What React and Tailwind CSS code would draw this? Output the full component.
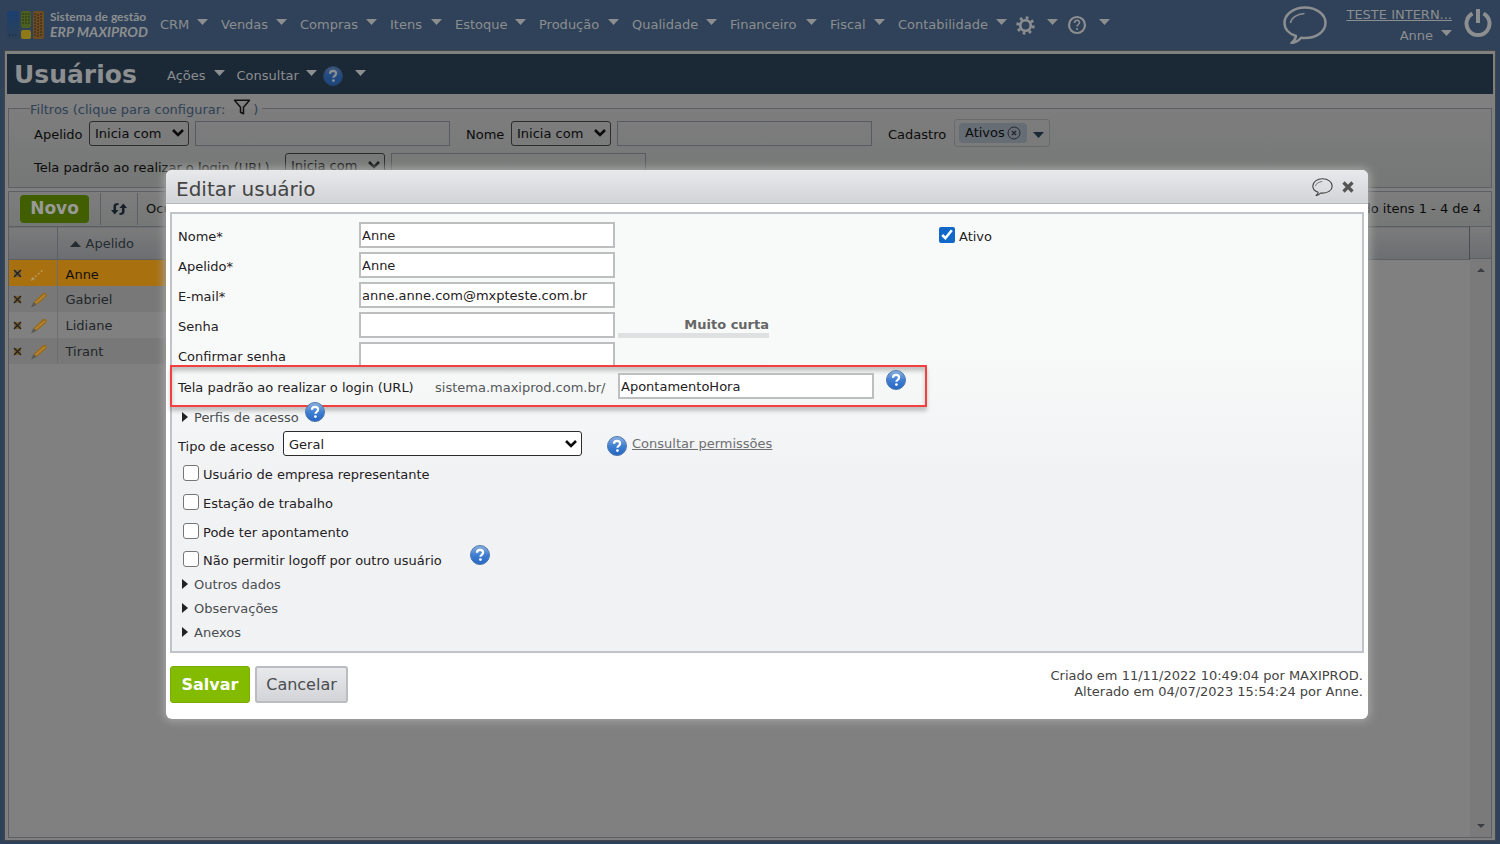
import React, { useState } from 'react';
import { LuFilter } from 'react-icons/lu';

const menus = [
  { label: 'CRM', width: 'w-[48px]' },
  { label: 'Vendas', width: 'w-[66px]' },
  { label: 'Compras', width: 'w-[77px]' },
  { label: 'Itens', width: 'w-[52px]' },
  { label: 'Estoque', width: 'w-[71px]' },
  { label: 'Produção', width: 'w-[80px]' },
  { label: 'Qualidade', width: 'w-[85px]' },
  { label: 'Financeiro', width: 'w-[87px]' },
  { label: 'Fiscal', width: 'w-[55px]' },
  { label: 'Contabilidade', width: 'w-[109px]' },
];

const users = ['Anne', 'Gabriel', 'Lidiane', 'Tirant'];

const accessOptions = ['Usuário de empresa representante', 'Estação de trabalho', 'Pode ter apontamento'];

const Caret = ({ className = '' }) => (
  <svg viewBox="0 0 11 6" className={`h-[6px] w-[11px] shrink-0 ${className}`} fill="currentColor">
    <path d="M0 0h11L5.5 6z" />
  </svg>
);

const HelpIcon = ({ dim = false }) => (
  <svg viewBox="0 0 20 20" className="size-5 shrink-0">
    <defs>
      <linearGradient id={dim ? 'helpDim' : 'help'} x1="0" y1="0" x2="0" y2="1">
        <stop offset="0" stopColor={dim ? '#41597a' : '#8fb2df'} />
        <stop offset="0.5" stopColor={dim ? '#234a80' : '#3f7fd3'} />
        <stop offset="1" stopColor={dim ? '#1c4680' : '#2566c4'} />
      </linearGradient>
    </defs>
    <circle cx="10" cy="10" r="9.5" fill={`url(#${dim ? 'helpDim' : 'help'})`} stroke={dim ? '#27425f' : '#4f79ab'} />
    <path d="M7 7.8C7 5.9 8.3 4.9 10 4.9s3.1 1 3.1 2.6c0 2.3-2.7 2.3-2.7 4.3" fill="none" stroke={dim ? '#8c9096' : '#fff'} strokeWidth="2.2" />
    <circle cx="10.4" cy="14.6" r="1.4" fill={dim ? '#8c9096' : '#fff'} />
  </svg>
);

const Balloon = ({ className, strokeWidth }) => (
  <svg viewBox="0 0 44 38" className={className} fill="none" stroke="currentColor" strokeWidth={strokeWidth} strokeLinejoin="round">
    <path d="M13 30C6 28 1.500 23 1.500 17 1.500 8.500 10.500 1.500 22 1.500S42.500 8.500 42.500 17 33.500 32 22 32c-1.500 0-2.700 0-4-.3-2 2.500-5 4.800-9.500 5.300 2.500-1.800 4-4 4.500-7z" />
    <path d="M7.500 17c.5-5 6-9 14-9.500" strokeWidth={strokeWidth * 0.6} />
  </svg>
);

const Logo = () => (
  <svg viewBox="0 0 38 28" className="h-[28px] w-[38px] shrink-0">
    <defs>
      <linearGradient id="logoBlue" x1="0" y1="0" x2="0" y2="1">
        <stop offset="0" stopColor="#1b3f70" />
        <stop offset="1" stopColor="#2b4058" />
      </linearGradient>
    </defs>
    <rect x="0" y="0" width="12" height="28" rx="3" fill="url(#logoBlue)" />
    <rect x="14" y="0" width="10" height="17" rx="2" fill="#4c5f1e" />
    <rect x="14" y="19" width="10" height="9" rx="2" fill="#8f7a18" />
    <rect x="26" y="0" width="11" height="28" rx="2" fill="#6d4c22" />
    <path d="M28 2v24M31 3v23M34 2v24" stroke="#2c2420" strokeWidth="1" strokeDasharray="2 1" />
    <path d="M15 3h8M15 6h8M15 9h8M15 12h8" stroke="#26351a" strokeDasharray="2 1" />
    <path d="M2 24h8" stroke="#14202e" strokeDasharray="1 2" />
  </svg>
);

const Pencil = ({ faded }) => (
  <svg viewBox="0 0 18 16" className="h-4 w-[18px]">
    {faded ? (
      <>
        <path d="M5 11l9-8" stroke="#c0a070" strokeWidth="1.2" strokeDasharray="2 2" />
        <path d="M2 11l3 2-4 2z" fill="#b59a70" />
      </>
    ) : (
      <>
        <path d="M3.500 10L12.500 1.500c1-1 2.800-.9 3.700.1s.8 2.600-.2 3.500L6.500 13z" fill="#9a6c1f" />
        <path d="M3.500 10l3 3L1 15.500z" fill="#5a5a58" />
        <path d="M5.500 11L15 3" stroke="#b98a35" strokeWidth="1.200" />
      </>
    )}
  </svg>
);

const DeleteMark = () => (
  <svg viewBox="0 0 9 9" className="size-[9px]">
    <path d="M1 1h7v7H1z" fill="#7a6238" />
    <path d="M1 1l7 7M8 1L1 8" stroke="#1e1e1e" strokeWidth="1.200" />
  </svg>
);

const SelectBox = ({ id, options, className }) => (
  <span className={`relative inline-flex ${className}`}>
    <select id={id} className="h-full w-full appearance-none rounded-[3px] border border-[#2c2c2c] bg-transparent pl-[5px] pr-5 pt-[2px]">
      {options.map((o) => (
        <option key={o}>{o}</option>
      ))}
    </select>
    <svg viewBox="0 0 12 8" className="pointer-events-none absolute right-[5px] top-1/2 -mt-1 h-2 w-3" fill="none" stroke="#0b0b0b" strokeWidth="2.600">
      <path d="M1 1l5 5 5-5" />
    </svg>
  </span>
);

const TopBar = () => (
  <header className="flex h-[50px] shrink-0 items-center pl-[7px] pr-2 text-[#8c8e90]">
    <Logo />
    <div className="ml-[5px] w-[110px] pb-[2px] font-['Lato',sans-serif]">
      <div className="text-[12px] font-bold leading-[15px]">Sistema de gestão</div>
      <div className="text-[14px] font-bold italic leading-[15px]">ERP MAXIPROD</div>
    </div>
    <nav className="flex items-center gap-[13px]">
      {menus.map(({ label, width }) => (
        <button key={label} className={`flex items-center justify-between ${width}`}>
          {label}
          <Caret className="mb-[6px]" />
        </button>
      ))}
      <button aria-label="Configurações" className="-ml-1 flex items-center gap-3">
        <svg viewBox="0 0 20 20" className="size-[19px]" fill="none" stroke="currentColor">
          <circle cx="10" cy="10" r="5.500" strokeWidth="2.800" />
          <circle cx="10" cy="10" r="8.200" strokeWidth="3" strokeDasharray="2.900 3.540" />
        </svg>
        <Caret className="mb-[6px]" />
      </button>
      <button aria-label="Ajuda" className="-ml-1 flex items-center gap-3">
        <svg viewBox="0 0 20 20" className="size-5" fill="none" stroke="currentColor">
          <circle cx="10" cy="10" r="8" strokeWidth="2.200" />
          <path d="M7.500 8c0-3.500 5-3.500 5-.5 0 2-2.500 2-2.500 4M10 13v2" strokeWidth="1.600" />
        </svg>
        <Caret className="mb-[6px]" />
      </button>
    </nav>
    <div className="ml-auto flex items-center">
      <Balloon className="h-[38px] w-[44px]" strokeWidth={2.5} />
      <div className="ml-3 flex w-[113px] flex-col items-end leading-[21px]">
        <a href="#empresa" className="underline">TESTE INTERN...</a>
        <button className="flex items-center gap-2">
          Anne
          <Caret className="mb-[6px]" />
        </button>
      </div>
      <button aria-label="Sair" className="mb-1 ml-3">
        <svg viewBox="0 0 28 30" className="h-[30px] w-7" fill="none" stroke="currentColor" strokeWidth="4">
          <path d="M8.500 5.500a11.500 11.500 0 1 0 11 0" />
          <path d="M14 1v14" />
        </svg>
      </button>
    </div>
  </header>
);

const TitleBar = () => (
  <div className="flex h-10 shrink-0 items-center bg-[#1b2937] pl-[7px] pt-1 text-[#8c8e90]">
    <h1 className="w-[153px] pb-1 text-[25px] font-bold leading-none">Usuários</h1>
    <button className="flex items-center gap-2">
      Ações
      <Caret className="mb-[6px]" />
    </button>
    <button className="ml-3 flex items-center gap-[7px]">
      Consultar
      <Caret className="mb-[6px]" />
    </button>
    <button aria-label="Ajuda" className="ml-[6px] flex items-center gap-3">
      <HelpIcon dim />
      <Caret className="mb-[6px]" />
    </button>
  </div>
);

const FilterInput = ({ label }) => (
  <input aria-label={label} className="ml-[6px] h-[25px] w-[255px] border border-[#585b60]" />
);

const Filters = () => (
  <fieldset className="mx-px mt-[6px] h-[88px] shrink-0 border border-[#5c5f63] bg-linear-to-b from-[#7d7d7d] to-[#757876] pl-[25px] text-[#0b0b0b]">
    <legend className="-ml-1 flex h-4 items-center gap-2 text-[#2e4156]">
      <span className="pt-[3px]">Filtros (clique para configurar:</span>
      <span className="flex items-center gap-[2px] pr-1">
        <LuFilter className="mb-[2px] size-[18px] text-[#111]" />
        <span className="pt-[3px]">)</span>
      </span>
    </legend>
    <div className="mt-[3px] flex h-7 items-center">
      <label htmlFor="f-apelido" className="w-[49px] pt-1">Apelido</label>
      <SelectBox id="f-apelido" options={['Inicia com']} className="ml-[6px] h-[25px] w-[100px]" />
      <FilterInput label="Valor de apelido" />
      <label htmlFor="f-nome" className="ml-4 w-[40px] pt-1">Nome</label>
      <SelectBox id="f-nome" options={['Inicia com']} className="ml-[5px] h-[25px] w-[100px]" />
      <FilterInput label="Valor de nome" />
      <span className="ml-4 w-[61px] pt-1">Cadastro</span>
      <div className="ml-[5px] flex h-7 w-[96px] items-center rounded-[3px] border border-[#686b6e] pl-1">
        <span className="flex h-5 items-center gap-[2px] rounded bg-[#666d75] px-[6px]">
          Ativos
          <button aria-label="Remover Ativos">
            <svg viewBox="0 0 14 14" className="size-[14px]" fill="none" stroke="#26292c">
              <circle cx="7" cy="7" r="6" />
              <path d="M5 5l4 4M9 5L5 9" strokeWidth="1.400" />
            </svg>
          </button>
        </span>
        <Caret className="ml-[6px] mt-1 text-[#1b2937]" />
      </div>
    </div>
    <div className="mt-1 flex h-7 items-center">
      <label htmlFor="f-tela" className="w-[245px] pt-[6px]">Tela padrão ao realizar o login (URL)</label>
      <SelectBox id="f-tela" options={['Inicia com']} className="ml-[6px] h-[25px] w-[100px]" />
      <FilterInput label="Valor de tela padrão" />
    </div>
  </fieldset>
);

const rowColors = ['bg-[#a8700f]', 'bg-[#777877]', 'bg-[#808080]', 'bg-[#777877]'];

const UserGrid = () => (
  <section className="mx-px mb-[2px] mt-[3px] flex grow flex-col border border-[#5c5f63]">
    <div className="flex h-[34px] shrink-0 items-center bg-linear-to-b from-[#7d7d7d] to-[#757876] text-[#0b0b0b]">
      <button className="ml-[11px] h-7 w-[69px] rounded bg-[#415f00] text-[17px] font-bold text-[#999]">Novo</button>
      <button aria-label="Atualizar" className="ml-[11px] flex h-8 w-[38px] items-center justify-center border-x border-[#5c5f63]">
        <svg viewBox="0 0 18 14" className="h-[14px] w-[18px]" fill="#15202b">
          <path d="M8.500 1v2C6.500 3 6 3.500 6 5v3h2.500L4.700 12.500 1 8h2.500V4.500C3.500 2 5 1 8.500 1z" />
          <path d="M9.500 13v-2c2 0 2.500-.5 2.500-2V6H9.500l3.800-4.500L17 6h-2.500v3.500c0 2.500-1.500 3.500-5 3.500z" />
        </svg>
      </button>
      <span className="ml-2">Ocultar</span>
      <span className="ml-auto mr-[10px]">Exibindo itens 1 - 4 de 4</span>
    </div>
    <div className="flex grow">
      <table className="grow self-start border-collapse">
        <thead>
          <tr className="h-[33px] border-y border-[#5c5f63] bg-linear-to-b from-[#7b7b7b] to-[#6c6e71] text-left text-[#252b31]">
            <th className="w-[48px] border-r border-[#5c5f63]" aria-label="Comandos"></th>
            <th className="w-[600px] pl-3 font-normal">
              <span className="flex items-center gap-[5px] pt-[2px]">
                <Caret className="rotate-180" />
                Apelido
              </span>
            </th>
            <th className="border-r border-[#4a4d52]" aria-label="Nome"></th>
          </tr>
        </thead>
        <tbody>
          {users.map((user, i) => (
            <tr key={user} className={`h-[26px] ${i === 0 ? 'text-[#14100a]' : 'text-[#22262a]'}`}>
              <td className={`border-r border-[#6c6f72] ${rowColors[i]}`}>
                <span className="flex items-center gap-2 pl-1 pt-[2px]">
                  <DeleteMark />
                  <Pencil faded={i === 0} />
                </span>
              </td>
              <td className={`pl-2 pt-[3px] ${rowColors[i]}`}>{user}</td>
              <td></td>
            </tr>
          ))}
        </tbody>
      </table>
      <div className="flex w-[21px] shrink-0 flex-col items-center justify-between bg-[#7a7a7a] text-[#3a3e44]">
        <div className="flex h-[46px] w-full flex-col items-center justify-between">
          <div className="h-[33px] w-full border-y border-[#5c5f63] bg-linear-to-b from-[#7b7b7b] to-[#6c6e71]" />
          <svg viewBox="0 0 8 4" className="h-1 w-2" fill="currentColor"><path d="M0 4h8L4 0z" /></svg>
        </div>
        <svg viewBox="0 0 8 4" className="mb-[9px] h-1 w-2" fill="currentColor"><path d="M0 0h8L4 4z" /></svg>
      </div>
    </div>
  </section>
);

const FormRow = ({ id, label, type = 'text', value = '', children }) => (
  <div className="flex h-[30px] items-center">
    <label htmlFor={id} className="w-[181px] pt-1">{label}</label>
    <input id={id} type={type} defaultValue={value} className="h-[26px] w-[256px] border-2 border-[#bcbebf] bg-white px-px" />
    {children}
  </div>
);

const Expander = ({ label }) => (
  <button type="button" className="flex h-6 items-center gap-[6px] pl-1 text-[#4a4d50]">
    <svg viewBox="0 0 6 10" className="mb-[2px] h-[10px] w-[6px]" fill="#222"><path d="M0 0l6 5-6 5z" /></svg>
    {label}
  </button>
);

const CheckBox = ({ checked, onChange, label }) => (
  <label className="flex items-center gap-1">
    <input
      type="checkbox"
      checked={checked}
      onChange={onChange}
      className={checked ? 'mb-px size-4 accent-[#1168c8]' : 'mb-px size-4 appearance-none rounded-[3px] border border-[#767676] bg-white'}
    />
    <span className="pt-[3px]">{label}</span>
  </label>
);

const EditUserDialog = () => {
  const [checks, setChecks] = useState({ ativo: true });
  const toggle = (key) => setChecks({ ...checks, [key]: !checks[key] });

  return (
    <div role="dialog" aria-label="Editar usuário" className="w-full overflow-hidden rounded-[6px] bg-white text-[#1f2123] shadow-[0_0_8px_2px_#a4a6a4]">
      <div className="flex h-[34px] items-center border-b border-[#b6b9bd] bg-linear-to-b from-[#e8e9eb] to-[#d3d4d8] pl-[10px] pr-[14px] text-[#444]">
        <h2 className="grow pt-[5px] text-[20px] leading-6">Editar usuário</h2>
        <button aria-label="Comentários"><Balloon className="h-[18px] w-[21px]" strokeWidth={2.4} /></button>
        <button aria-label="Fechar" className="ml-[9px]">
          <svg viewBox="0 0 12 12" className="size-3" stroke="#555" strokeWidth="3.200"><path d="M1.500 1.500l9 9M10.500 1.500l-9 9" /></svg>
        </button>
      </div>

      <form className="px-1 pb-4 pt-2">
        <div className="border-2 border-[#c0c3c7] bg-linear-to-b from-[#f8faf9] from-30% to-[#f1f2f4] to-60% pb-[6px] pl-[6px] pt-[6px]">
          <div className="flex items-center">
            <div className="w-[761px]">
              <FormRow id="nome" label="Nome*" value="Anne" />
            </div>
            <CheckBox label="Ativo" checked={!!checks.ativo} onChange={() => toggle('ativo')} />
          </div>
          <FormRow id="apelido" label="Apelido*" value="Anne" />
          <FormRow id="email" label="E-mail*" value="anne.anne.com@mxpteste.com.br" />
          <FormRow id="senha" label="Senha" type="password">
            <span className="ml-[3px] mt-[5px] w-[151px] border-b-[5px] border-[#dfe0e1] text-right font-bold leading-4 text-[#666]">Muito curta</span>
          </FormRow>
          <div className="h-[25px] overflow-hidden">
            <FormRow id="confirmar" label="Confirmar senha" type="password" />
          </div>

          <div className="-ml-2 flex h-[42px] w-[757px] items-center border-2 border-[#f43f3f] pl-[6px] shadow-[0_4px_4px_#00000038,inset_0_4px_4px_#00000038]">
            <label htmlFor="url" className="w-[257px] pt-1">Tela padrão ao realizar o login (URL)</label>
            <span className="w-[183px] pt-1 text-[#55585a]">sistema.maxiprod.com.br/</span>
            <input id="url" defaultValue="ApontamentoHora" className="h-[26px] w-[256px] border-2 border-[#bcbebf] bg-white px-px" />
            <span className="mb-3 ml-3"><HelpIcon /></span>
          </div>

          <div className="flex h-[21px] items-center gap-[6px]">
            <Expander label="Perfis de acesso" />
            <span className="mb-3"><HelpIcon /></span>
          </div>
          <div className="flex h-[31px] items-center">
            <label htmlFor="tipo" className="w-[105px] pt-[6px]">Tipo de acesso</label>
            <SelectBox id="tipo" options={['Geral']} className="h-[25px] w-[299px] rounded-[3px] bg-white" />
            <span className="ml-[25px] pt-1"><HelpIcon /></span>
            <a href="#permissoes" className="ml-[5px] text-[#6d6f71] underline">Consultar permissões</a>
          </div>

          <div className="pl-[5px]">
            {accessOptions.map((option) => (
              <div key={option} className="flex h-[29px] items-center">
                <CheckBox label={option} checked={!!checks[option]} onChange={() => toggle(option)} />
              </div>
            ))}
            <div className="flex h-[27px] items-center">
              <CheckBox label="Não permitir logoff por outro usuário" checked={!!checks.logoff} onChange={() => toggle('logoff')} />
              <span className="mb-[10px] ml-7"><HelpIcon /></span>
            </div>
          </div>
          <Expander label="Outros dados" />
          <Expander label="Observações" />
          <Expander label="Anexos" />
        </div>

        <div className="mt-[13px] flex items-start gap-[5px] text-base">
          <button type="button" className="h-[37px] w-20 rounded-[3px] border border-[#78ae00] bg-[#82bb00] font-bold text-white">Salvar</button>
          <button type="button" className="h-[37px] w-[93px] rounded-[3px] border-2 border-[#b9bcc0] bg-linear-to-b from-[#e8e9eb] to-[#d3d4d8] text-[#4a4d50]">Cancelar</button>
          <p className="ml-auto pr-px pt-[2px] text-right text-[13px] leading-4 text-[#444]">
            Criado em 11/11/2022 10:49:04 por MAXIPROD.
            <br />
            Alterado em 04/07/2023 15:54:24 por Anne.
          </p>
        </div>
      </form>
    </div>
  );
};

const App = () => (
  <div className="relative flex min-h-screen flex-col bg-[#2f4259] font-['DejaVu_Sans',Verdana,sans-serif] text-[13px]">
    <TopBar />
    <main className="mx-1 mb-[3px] flex grow flex-col border border-[#444648] bg-[#808080] px-[2px] pt-[3px]">
      <TitleBar />
      <Filters />
      <UserGrid />
    </main>
    <div className="absolute inset-0 flex items-start pl-[166px] pr-[132px] pt-[170px]">
      <EditUserDialog />
    </div>
  </div>
);

export default App;
